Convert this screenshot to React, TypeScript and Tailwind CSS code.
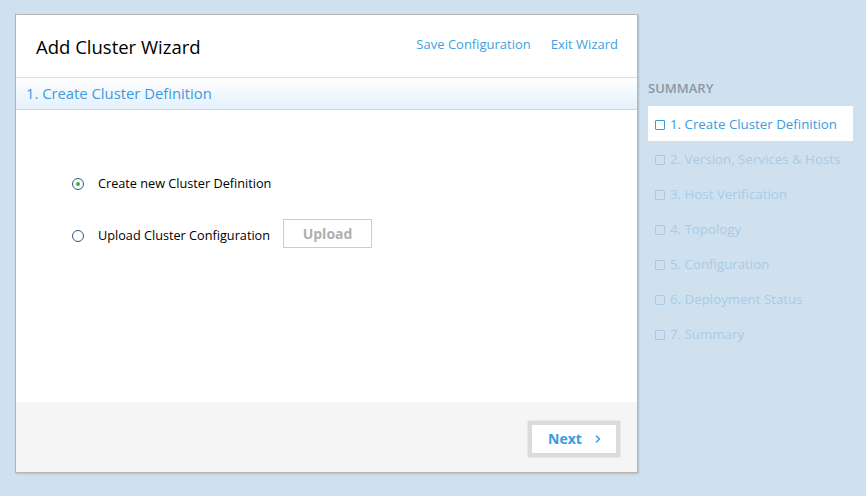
import { ChevronRight } from 'lucide-react';

const steps = [
  '1. Create Cluster Definition',
  '2. Version, Services & Hosts',
  '3. Host Verification',
  '4. Topology',
  '5. Configuration',
  '6. Deployment Status',
  '7. Summary',
];

function Radio({ checked }: { checked?: boolean }) {
  return (
    <span className="w-[12px] h-[12px] rounded-full border border-[#2f5a80] bg-white flex items-center justify-center shrink-0">
      {checked && <span className="w-[4px] h-[4px] rounded-full bg-[#3cb04a]" />}
    </span>
  );
}

export default function App() {
  return (
    <div className="w-[866px] h-[496px] bg-[#cfe1ee] flex pt-[14px] pl-[15px] font-['Open_Sans',sans-serif] overflow-hidden">
      {/* Wizard card */}
      <div className="w-[623px] h-[459px] bg-white border border-[#b4b4b4] shadow-[1px_1px_2px_rgba(0,0,0,0.15)] flex flex-col">
        <div className="h-[63px] flex items-center justify-between pl-[20px] pr-[19px] border-b border-[#dedede]">
          <h1 className="text-[18.5px] text-black mt-[2px]">Add Cluster Wizard</h1>
          <div className="flex gap-[20px] text-[13px] text-[#3f9fe0] -mt-[2px]">
            <span>Save Configuration</span>
            <span>Exit Wizard</span>
          </div>
        </div>
        <div className="h-[32px] flex items-center pl-[10px] bg-gradient-to-b from-white to-[#e4f0fc] border-b border-[#c8d8e6]">
          <span className="text-[14.8px] text-[#3a9be0]">1. Create Cluster Definition</span>
        </div>
        <div className="flex-1 flex flex-col pl-[56px] pt-[64px] gap-[32px]">
          <label className="flex items-center gap-[14px] h-[20px]">
            <Radio checked />
            <span className="text-[12.7px] text-black">Create new Cluster Definition</span>
          </label>
          <label className="flex items-center gap-[14px] h-[20px]">
            <Radio />
            <span className="text-[12.7px] text-black">Upload Cluster Configuration</span>
            <span className="ml-[-1px] mb-[6px] w-[89px] h-[29px] shrink-0 border border-[#cccccc] flex items-center justify-center text-[14px] font-bold text-[#b0b0b0]">
              Upload
            </span>
          </label>
        </div>
        <div className="h-[70px] bg-[#f5f5f5] flex items-center justify-end pr-[17px] pt-[3px]">
          <button className="w-[92px] h-[36px] bg-white border-[4px] border-[#dcdadc] shadow-[0_0_2px_rgba(0,0,0,0.15)] flex items-center justify-center gap-[10px] pl-[4px] text-[14px] font-bold text-[#3a9be0]">
            Next
            <ChevronRight className="w-[12px] h-[12px]" strokeWidth={3} />
          </button>
        </div>
      </div>

      {/* Summary sidebar */}
      <div className="ml-[10px] pt-[65px] w-[205px]">
        <div className="text-[13px] font-semibold text-[#8b98a4] h-[18px] leading-[18px]">SUMMARY</div>
        <div className="mt-[9px] flex flex-col">
          {steps.map((s, i) => (
            <div
              key={s}
              className={
                i === 0
                  ? 'h-[35px] bg-white flex items-center gap-[5px] pl-[7px] pt-[2px] text-[13.3px] text-[#3a9be0]'
                  : 'h-[35px] flex items-center gap-[5px] pl-[7px] pt-[2px] text-[13.3px] text-[#a9cbe6]'
              }
            >
              <span
                className={
                  i === 0
                    ? 'w-[10px] h-[10px] border border-[#3a9be0] rounded-[1px]'
                    : 'w-[10px] h-[10px] border border-[#a9cbe6] rounded-[1px]'
                }
              />
              {s}
            </div>
          ))}
        </div>
      </div>
    </div>
  );
}
